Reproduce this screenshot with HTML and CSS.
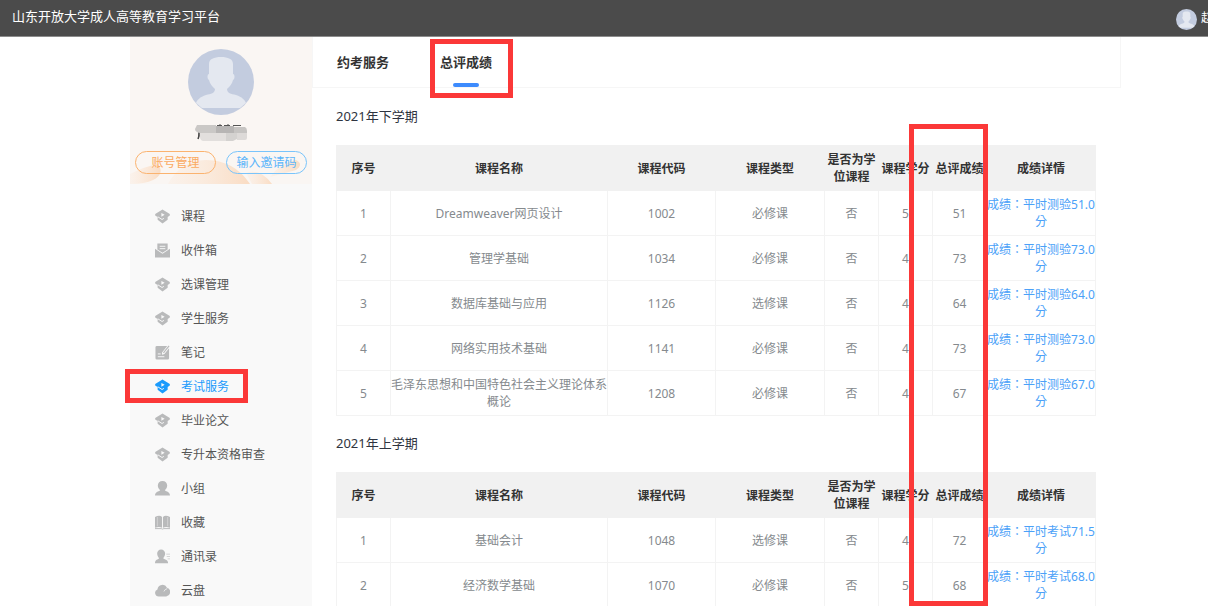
FILE: index.html
```html
<!DOCTYPE html>
<html lang="zh-CN">
<head>
<meta charset="utf-8">
<title>山东开放大学成人高等教育学习平台</title>
<link rel="stylesheet" href="styles.css">
</head>
<body>
<svg class="defs" aria-hidden="true">
  <symbol id="i-course" viewBox="0 0 16 16"><path fill="currentColor" fill-rule="evenodd" d="M8 .5 15.800 5.200V7L13.500 8.500V11.500L8 15.500 2.800 11.500V8.500L.2 7V5.200ZM6.800 4.200v4L10.300 6.200Z"/><path fill="none" stroke="#f9f9f9" d="M3 8.300 7.500 11.200 9.500 10"/></symbol>
  <symbol id="i-mail" viewBox="0 0 16 16"><path fill="currentColor" d="M0 6 8 11.500 16 6V15.500H0ZM2.500 .5h11v6.500L8 10.500 2.500 7Z"/><path stroke="#f9f9f9" d="M5 3.500h6M5 6h6"/></symbol>
  <symbol id="i-note" viewBox="0 0 16 16"><path fill="currentColor" d="M2 1h11L7.500 8v2.500L10 9.500l5-6V14q0 1.500-1.500 1.500H2Q.5 15.500.5 14V2.500Q.5 1 2 1Z"/><path fill="none" stroke="currentColor" stroke-width="1.300" d="m9 8.500 6-7.500"/><path stroke="#f9f9f9" d="M3 9.500h3M3 12.500h7"/></symbol>
  <symbol id="i-group" viewBox="0 0 16 16"><path fill="currentColor" d="M8 0c3 0 5 2 5 4.800 0 2.200-1.200 3.700-2.500 5C11.500 11.300 16 11 16 15.500H0c0-4.500 4.500-4.200 5.500-5.700C4.200 8.500 3 7 3 4.800 3 2 5 0 8 0Z"/></symbol>
  <symbol id="i-book" viewBox="0 0 16 16"><path fill="currentColor" d="M0 2q5-2.500 7.500 0v11.500q-3-1.500-7.500 0ZM8.500 2Q11-.5 16 2v11.500q-4.500-1.500-7.500 0Z"/><path stroke="currentColor" fill="none" d="M0 14.500h6.500L8 15l1.500-.500H16"/><path stroke="#f9f9f9" stroke-width=".4" d="M2.500 2v10M13.500 2v10"/></symbol>
  <symbol id="i-contacts" viewBox="0 0 16 16"><path fill="currentColor" d="M6.500 .5C9 .5 10.800 2.500 10.800 4.800S9.500 8.500 8.800 9.800c1 1.500 5.200 1 5.200 5.400H0c0-4.400 3.500-3.900 4.300-5.400C3.500 8.500 2.300 7 2.300 4.800S4 .5 6.500 .5Z"/><path stroke="currentColor" stroke-opacity=".6" d="M12 5.500h4M12.500 8h3.500M13.500 10.500h2.500"/></symbol>
  <symbol id="i-cloud" viewBox="0 0 16 16"><path fill="currentColor" d="M4 14.500A4 4 0 0 1 2.600 6.800 5.400 5.400 0 0 1 12.800 5 4.900 4.900 0 0 1 12 14.500Z"/><path fill="none" stroke="#f9f9f9" stroke-width=".8" d="M9.500 9q1-2.500 3.500-3"/></symbol>
  <symbol id="i-user" viewBox="0 0 66 66"><circle cx="33" cy="33" r="33" fill="#c3ccdf"/><path fill="#e4e8f0" d="M21 15c0-5 5-7 12-7s12 2 12 7v10c2 0 2 5 0 6-1 4-3 6-6 9 0 4 4 5 9 6 6 2 9 5 10 8l-6 5H14l-6-5c1-3 4-6 10-8 5-1 9-2 9-6-3-3-5-5-6-9-2-1-2-6 0-6Z"/></symbol>
</svg>

<header class="topbar">
  <h1 class="brand">山东开放大学成人高等教育学习平台</h1>
  <div class="user">
    <svg class="user-pic" aria-hidden="true"><use href="#i-user"/></svg>
    <span>赵</span>
  </div>
</header>

<div class="page">
  <aside class="sidebar">
    <section class="profile">
      <svg class="profile-bg" viewBox="0 0 182 147" preserveAspectRatio="none" aria-hidden="true">
        <defs>
          <linearGradient id="g1" x1="0" x2="1"><stop offset="0" stop-color="#fbe9da" stop-opacity=".3"/><stop offset="1" stop-color="#fadcc3"/></linearGradient>
        </defs>
        <path fill="url(#g1)" d="M0 137q16-8 28-10 7 10-5 16-8 4-23 4Z"/>
        <path fill="url(#g1)" d="M38 147q12-23 38-24 28 0 44 24Z"/>
        <path fill="url(#g1)" d="M116 136q14-5 26 11h-20Z"/>
        <path fill="url(#g1)" d="M140 140q10-14 26-17 8 4 0 10Z"/>
      </svg>
      <svg class="avatar" role="img" aria-label="头像"><use href="#i-user"/></svg>
      <svg class="masked-name" viewBox="0 0 52 17" aria-hidden="true">
        <path stroke="#444" stroke-width="1.500" d="M4 8v4L3 15"/><path stroke="#555" d="M22 1.500h5m2 0h6m3 0h8M25 0v3m8-3v3"/>
        <path fill="#cac8c6" d="M2 1h19v8H5Q0 8 0 5Z"/><path fill="#b7b5b4" d="M21 2h18v7H21Z"/><path fill="#c6c4c2" d="M39 3h11q2 1 2 4v2H39Z"/>
        <path fill="#e2dfdd" d="M5 9h26v8H8q-3-1-3-4Z"/><path fill="#d4d2d0" d="M31 9h11v6l-4 2h-7Z"/><path fill="#dddad8" d="M42 9h10v5q0 2-2 2h-8Z"/>
      </svg>
      <div class="profile-actions">
        <button class="pill pill-orange" type="button">账号管理</button>
        <button class="pill pill-blue" type="button">输入邀请码</button>
      </div>
    </section>
    <nav class="menu">
      <a href="#"><svg><use href="#i-course"/></svg>课程</a>
      <a href="#"><svg><use href="#i-mail"/></svg>收件箱</a>
      <a href="#"><svg><use href="#i-course"/></svg>选课管理</a>
      <a href="#"><svg><use href="#i-course"/></svg>学生服务</a>
      <a href="#"><svg><use href="#i-note"/></svg>笔记</a>
      <a href="#" class="current"><svg><use href="#i-course"/></svg>考试服务<span class="mark mark-menu"></span></a>
      <a href="#"><svg><use href="#i-course"/></svg>毕业论文</a>
      <a href="#"><svg><use href="#i-course"/></svg>专升本资格审查</a>
      <a href="#"><svg><use href="#i-group"/></svg>小组</a>
      <a href="#"><svg><use href="#i-book"/></svg>收藏</a>
      <a href="#"><svg><use href="#i-contacts"/></svg>通讯录</a>
      <a href="#"><svg><use href="#i-cloud"/></svg>云盘</a>
    </nav>
  </aside>

  <main class="content">
    <nav class="tabs">
      <a href="#">约考服务</a>
      <a href="#" class="active">总评成绩<span class="mark mark-tab"></span></a>
    </nav>
    <div class="terms">
      <section>
        <h2>2021年下学期</h2>
        <table>
          <colgroup><col class="c-no"><col class="c-name"><col class="c-code"><col class="c-type"><col class="c-flag"><col class="c-credit"><col class="c-score"><col></colgroup>
          <thead><tr><th>序号</th><th>课程名称</th><th>课程代码</th><th>课程类型</th><th>是否为学位课程</th><th>课程学分</th><th>总评成绩</th><th>成绩详情</th></tr></thead>
          <tbody>
            <tr><td>1</td><td>Dreamweaver网页设计</td><td>1002</td><td>必修课</td><td>否</td><td>5</td><td>51</td><td><a href="#">成绩：平时测验51.0分</a></td></tr>
            <tr><td>2</td><td>管理学基础</td><td>1034</td><td>必修课</td><td>否</td><td>4</td><td>73</td><td><a href="#">成绩：平时测验73.0分</a></td></tr>
            <tr><td>3</td><td>数据库基础与应用</td><td>1126</td><td>选修课</td><td>否</td><td>4</td><td>64</td><td><a href="#">成绩：平时测验64.0分</a></td></tr>
            <tr><td>4</td><td>网络实用技术基础</td><td>1141</td><td>必修课</td><td>否</td><td>4</td><td>73</td><td><a href="#">成绩：平时测验73.0分</a></td></tr>
            <tr><td>5</td><td>毛泽东思想和中国特色社会主义理论体系概论</td><td>1208</td><td>必修课</td><td>否</td><td>4</td><td>67</td><td><a href="#">成绩：平时测验67.0分</a></td></tr>
          </tbody>
        </table>
      </section>
      <section>
        <h2>2021年上学期</h2>
        <table>
          <colgroup><col class="c-no"><col class="c-name"><col class="c-code"><col class="c-type"><col class="c-flag"><col class="c-credit"><col class="c-score"><col></colgroup>
          <thead><tr><th>序号</th><th>课程名称</th><th>课程代码</th><th>课程类型</th><th>是否为学位课程</th><th>课程学分</th><th>总评成绩</th><th>成绩详情</th></tr></thead>
          <tbody>
            <tr><td>1</td><td>基础会计</td><td>1048</td><td>选修课</td><td>否</td><td>4</td><td>72</td><td><a href="#">成绩：平时考试71.5分</a></td></tr>
            <tr><td>2</td><td>经济数学基础</td><td>1070</td><td>必修课</td><td>否</td><td>5</td><td>68</td><td><a href="#">成绩：平时考试68.0分</a></td></tr>
          </tbody>
        </table>
      </section>
      <span class="mark mark-column"></span>
    </div>
  </main>
</div>
</body>
</html>
```
FILE: styles.css
```css
* { box-sizing: border-box; }

body {
  display: flex;
  flex-direction: column;
  height: 100vh;
  margin: 0;
  overflow: hidden;
  background: #fff;
  color: #333;
  font: 12px/17px "Noto Sans", "Noto Sans CJK SC", sans-serif;
}

a { color: inherit; text-decoration: none; }
.defs { position: absolute; width: 0; height: 0; }

.topbar {
  display: flex;
  flex: none;
  justify-content: space-between;
  height: 37px;
  padding-left: 12px;
  border-bottom: 1px solid #8c8c8c;
  background: #4b4b4b;
  color: #fff;
}
.brand { margin: 0; font-size: 13px; font-weight: 400; line-height: 32px; }
.user {
  display: flex;
  align-items: center;
  gap: 4px;
  width: 32px;
  overflow: hidden;
  line-height: 36px;
}
.user-pic { flex: none; width: 21px; height: 21px; margin-top: 2px; }
.user span { flex: none; }

.page {
  display: flex;
  flex: 1;
  min-height: 0;
  padding: 0 87px 0 130px;
}

.sidebar { flex: none; width: 182px; background: #f9f9f9; }
.profile {
  display: flex;
  position: relative;
  flex-direction: column;
  align-items: center;
  height: 147px;
  padding-top: 12px;
  background: #faf6f3;
}
.profile-bg { position: absolute; inset: 0; width: 100%; height: 100%; }
.avatar { position: relative; width: 66px; height: 66px; }
.masked-name { position: relative; width: 52px; height: 17px; margin-top: 9px; }
.profile-actions { display: flex; position: relative; gap: 10px; margin-top: 10px; }
.pill {
  width: 81px;
  height: 23px;
  padding: 0;
  border: 1px solid;
  border-radius: 12px;
  background: transparent;
  font: inherit;
  line-height: 20px;
}
.pill-orange { border-color: #fbb36f; color: #fbaa60; }
.pill-blue { border-color: #79c4fb; color: #5cb5fa; }

.menu { padding-top: 15px; }
.menu a {
  display: flex;
  position: relative;
  align-items: center;
  gap: 11px;
  height: 34px;
  padding-left: 25px;
  color: #555;
}
.menu svg { width: 15px; height: 15px; color: #b9babb; }
.menu .current, .menu .current svg { color: #1b9bfc; }

.content { flex: 1; min-width: 0; }
.tabs {
  display: flex;
  gap: 51px;
  height: 51px;
  padding-left: 24px;
  border: 1px solid #f6f6f6;
  border-top: 0;
  font-size: 13px;
  font-weight: 700;
  line-height: 50px;
}
.tabs a { position: relative; }
.tabs .active::after {
  position: absolute;
  bottom: 0;
  left: 50%;
  width: 26px;
  height: 4px;
  margin-left: -13px;
  border-radius: 2px;
  background: #3d8bfd;
  content: "";
}

.terms { position: relative; padding: 17px 25px 0 24px; }
.terms section { margin-bottom: 16px; }
.terms h2 {
  margin: 0 0 17px;
  color: #2f3440;
  font-size: 13px;
  font-weight: 400;
  line-height: 23px;
}

table { width: 100%; border-collapse: collapse; table-layout: fixed; }
th, td { padding: 5px 0; border: 1px solid #f3f3f3; text-align: center; }
th { border-color: #f1f1f1; background: #f1f1f1; }
th:nth-child(n+6) { white-space: nowrap; }
td { color: #858a8e; }
td a {
  color: #4ba1f8;
  font-family: "Noto Sans", "Noto Sans CJK TC", sans-serif;
  -webkit-locale: "zh-TW";
}
.c-no { width: 54px; }
.c-name { width: 217px; }
.c-code { width: 108px; }
.c-type { width: 109px; }
.c-flag, .c-credit { width: 54px; }
.c-score { width: 54px; }

/* red call-out frames over the page */
.mark { position: absolute; border: 5px solid #fb3838; pointer-events: none; }
.mark-menu { inset: 0 64px 0 -5px; }
.mark-tab { inset: 2px -21px -11px -10px; }
.mark-column { top: 36px; right: 133px; width: 79px; height: calc(100vh - 124px); }
```
